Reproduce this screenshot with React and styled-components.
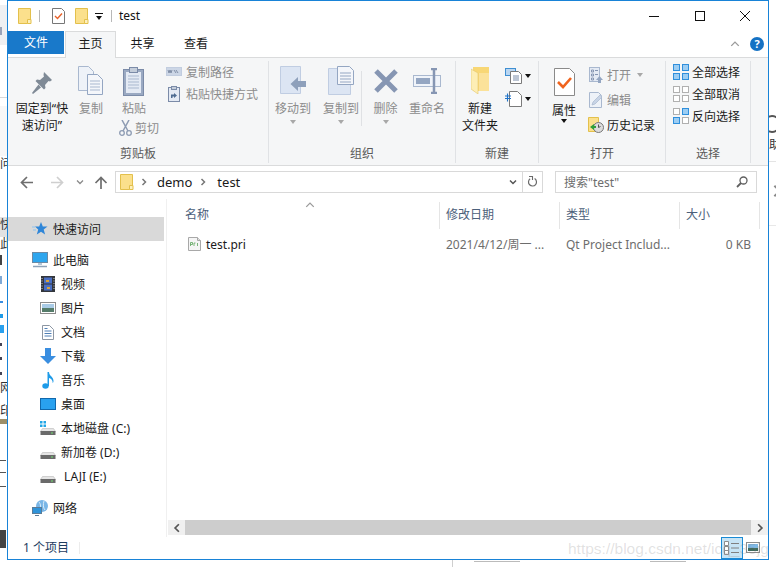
import React from 'react';
import styled, { createGlobalStyle } from 'styled-components';

const GlobalStyle = createGlobalStyle`
	html, body {
		margin: 0;
		padding: 0;
		background: #fff;
	}
	body {
		font-family: "Noto Sans", "Noto Sans CJK SC", sans-serif;
		font-size: 12px;
		color: #1a1a1a;
	}
`;

/* icons */
const Svg = ({ w = 16, h = 16, children }) => (
	<svg width={w} height={h} viewBox={`0 0 ${w} ${h}`} style={{ display: 'block', flex: 'none' }}>
		{children}
	</svg>
);

const QuickFolder = () => (
	<Svg w={14} h={16}>
		<path d="M.5.5h12v12l-3 3H.5z" fill="#fbe08c" stroke="#e3c04c" />
		<path d="M9.5 15.5v-4h3.5v4z" fill="#fdf0be" stroke="#e3c04c" />
	</Svg>
);

const CheckDoc = () => (
	<Svg w={13} h={16}>
		<path d="M.5.5h9l3 3v12H.5z" fill="#fff" stroke="#777" />
		<path d="M3 8l2.5 2.5L10 5.5" fill="none" stroke="#e8622a" strokeWidth="1.4" />
	</Svg>
);

const PinIcon = () => (
	<Svg w={22} h={24}>
		<path d="M13 1l8 8-2 1.5-1.5-.5-3.5 4 .5 3-1.5 1.5L4.500 10 6 8.500l3 .5 4-3.500-.5-1.500z" fill="#7f8a96" />
		<path d="M7.500 13.500L1 22l1 1 8-6.500z" fill="#7f8a96" />
	</Svg>
);

const CopyIcon = () => (
	<Svg w={26} h={29}>
		<path d="M.5.5h10l5 5v19H.5z" fill="#eef2f8" stroke="#a9b8cf" />
		<path d="M9.500 8.500h10l5 5v15h-15z" fill="#f4f6fa" stroke="#94a6c2" />
		<path d="M12 15h10M12 18h10M12 21h10M12 24h10" stroke="#a9b8cf" />
	</Svg>
);

const PasteIcon = () => (
	<Svg w={22} h={30}>
		<rect x=".5" y="3.500" width="20" height="26" fill="#9aa9c2" stroke="#7b8ba8" />
		<rect x="3" y="6" width="15" height="21" fill="#e4eaf4" />
		<path d="M5 10h11M5 13h11M5 16h11M5 19h11M5 22h11" stroke="#a9b8cf" />
		<rect x="6.500" y="1.500" width="8" height="5" fill="#c4cdda" stroke="#7b8ba8" />
	</Svg>
);

const CutIcon = () => (
	<Svg w={13} h={16}>
		<path d="M3 0l6 11M10 0L4 11" stroke="#8d9bb3" strokeWidth="1.5" fill="none" />
		<circle cx="3" cy="13" r="2.300" fill="none" stroke="#8d9bb3" strokeWidth="1.300" />
		<circle cx="10" cy="13" r="2.300" fill="none" stroke="#8d9bb3" strokeWidth="1.300" />
	</Svg>
);

const CopyPathIcon = () => (
	<Svg w={16} h={10}>
		<rect x=".5" y=".5" width="15" height="8" fill="#ccd6e6" stroke="#c2cddf" />
		<path d="M2 3l1 3 1-3 1 3 1-3M8 3l2 3M10 3l2 3" stroke="#6f7e98" strokeWidth=".8" fill="none" />
	</Svg>
);

const PasteShortcutIcon = () => (
	<Svg w={13} h={16}>
		<rect x=".5" y="1.500" width="11" height="14" fill="#e4eaf4" stroke="#7b8ba8" />
		<rect x="3.500" y=".5" width="5" height="3" fill="#c4cdda" stroke="#7b8ba8" />
		<path d="M3 12V8.500h3V7l3 2.500-3 2.500v-1.500H4.500V12z" fill="#4f6c92" />
	</Svg>
);

const MoveIcon = () => (
	<Svg w={27} h={29}>
		<path d="M.5.5h20v27H.5z" fill="#dce5f3" stroke="#c0cde2" />
		<path d="M10.500 18L18 11v4h8v6h-8v4z" fill="#8ea0bb" />
	</Svg>
);

const CopyToIcon = () => (
	<Svg w={27} h={30}>
		<path d="M.5 2.500h22v26H.5z" fill="#dce5f3" stroke="#c0cde2" />
		<path d="M9.500.5h12l4 4v14h-16z" fill="#f4f6fa" stroke="#94a6c2" />
		<path d="M12 7h11M12 10h11M12 13h11M12 16h11" stroke="#94a6c2" />
	</Svg>
);

const DeleteIcon = () => (
	<Svg w={26} h={26}>
		<path d="M3 3l20 20M23 3L3 23" stroke="#8696b3" strokeWidth="5" />
	</Svg>
);

const RenameIcon = () => (
	<Svg w={28} h={26}>
		<rect x=".5" y="7.500" width="27" height="11" fill="#f0f4fa" stroke="#a9b8cf" />
		<rect x="3" y="10" width="14" height="6" fill="#94a6c2" />
		<path d="M18 1h6M18 25h6M21 1v24" stroke="#8696b3" strokeWidth="2.500" />
	</Svg>
);

const NewFolderIcon = () => (
	<Svg w={19} h={27}>
		<path d="M2 0h16v24H2z" fill="#f8d775" />
		<path d="M8 6h10v18H8z" fill="#fbe29a" />
		<path d="M0 2l7 4v21l-7-5z" fill="#fdeeb5" stroke="#e4c66c" strokeWidth=".6" />
	</Svg>
);

const NewItemIcon = () => (
	<Svg w={17} h={16}>
		<rect x=".5" y=".5" width="10" height="7" fill="#b9d6f2" stroke="#3f8fd2" />
		<path d="M5.500 3.500h8l3 3v9h-11z" fill="#fff" stroke="#7a7a7a" />
		<path d="M8 8h6M8 10h6M8 12h6" stroke="#7a8ca8" />
	</Svg>
);

const EasyAccessIcon = () => (
	<Svg w={17} h={16}>
		<path d="M4.500.5h8l4 4v11h-12z" fill="#fff" stroke="#7a7a7a" />
		<path d="M0 5h6M0 7.500h6M2.500 2.500v8" stroke="#1f73c9" strokeWidth="1.100" />
	</Svg>
);

const PropertiesIcon = () => (
	<Svg w={21} h={28}>
		<path d="M.5.5h15l5 5v22H.5z" fill="#fff" stroke="#8a8a8a" />
		<path d="M4 14l5 5 8-9" fill="none" stroke="#f0641e" strokeWidth="2.600" />
	</Svg>
);

const OpenIcon = () => (
	<Svg w={14} h={16}>
		<rect x=".5" y=".5" width="10" height="14" fill="#e4eaf4" stroke="#a9b8cf" />
		<path d="M2.500 3h2v2h-2zM2.500 7h2v2h-2zM2.500 11h2v2h-2zM6 3.500h3M6 7.500h3" stroke="#8696b3" fill="none" />
		<path d="M7 13l3.500-4 3.500 4h-2v3h-3v-3z" fill="#94a6c2" />
	</Svg>
);

const EditIcon = () => (
	<Svg w={14} h={16}>
		<path d="M.5.5h9l3 3v12H.5z" fill="#eef2f8" stroke="#a9b8cf" />
		<path d="M3 13l1-3 7-7 2 2-7 7z" fill="#c8d4e6" stroke="#a9b8cf" strokeWidth=".7" />
	</Svg>
);

const HistoryIcon = () => (
	<Svg w={16} h={16}>
		<path d="M.5.5h10v11l-3 3h-7z" fill="#fbe08c" stroke="#e3c04c" />
		<circle cx="10.500" cy="10.500" r="5" fill="#dcdcdc" stroke="#777" />
		<path d="M10.500 7.500v3l2-1" fill="none" stroke="#555" />
		<path d="M2 10l4-3v2h2v2H6v2z" fill="#2f9e3a" />
	</Svg>
);

const GridIcon = ({ on }) => (
	<Svg w={16} h={16}>
		{[[0, 0], [9, 0], [0, 9], [9, 9]].map(([x, y], i) => (
			<rect
				key={`${x}-${y}`}
				x={x + 0.5}
				y={y + 0.5}
				width="6"
				height="6"
				fill={on[i] ? '#9ccdf3' : '#fff'}
				stroke={on[i] ? '#2f8fdc' : '#b0b0b0'}
			/>
		))}
	</Svg>
);

const SearchIcon = () => (
	<Svg w={12} h={12}>
		<circle cx="7.500" cy="4.500" r="3.500" fill="none" stroke="#5f5f5f" strokeWidth="1.300" />
		<path d="M5 7l-4 4" stroke="#5f5f5f" strokeWidth="1.800" />
	</Svg>
);

const RefreshIcon = () => (
	<Svg w={11} h={12}>
		<path d="M7.600 2.600a4 4 0 1 1-4.500.2" fill="none" stroke="#6a6a6a" strokeWidth="1.200" />
		<path d="M2 .5h3.500V4" fill="none" stroke="#6a6a6a" strokeWidth="1.100" />
	</Svg>
);

const Chevron = ({ dir = 'down', color = '#6a6a6a', size = 8, width = 1.500 }) => {
	const paths = {
		down: 'M1 2.500l3 3 3-3',
		up: 'M1 5.500l3-3 3 3',
		left: 'M5.500 1l-3 3 3 3',
		right: 'M2.500 1l3 3-3 3',
	};
	return (
		<svg width={size} height={size} viewBox="0 0 8 8" style={{ display: 'block', flex: 'none' }}>
			<path d={paths[dir]} fill="none" stroke={color} strokeWidth={width} />
		</svg>
	);
};

const NavArrow = ({ path, color }) => (
	<Svg w={14} h={13}>
		<path d={path} fill="none" stroke={color} strokeWidth="1.700" />
	</Svg>
);

const StarIcon = () => (
	<Svg w={16} h={14}>
		<path d="M9 0l1.800 4.500H15.500l-3.800 3 1.400 5L9 9.700l-4.200 2.800 1.400-5-3.200-3h4.200z" fill="#2f86d8" />
		<path d="M0 5h3M1 8h3" stroke="#8fc3ee" />
	</Svg>
);

const PcIcon = () => (
	<Svg w={16} h={16}>
		<rect x=".5" y=".5" width="15" height="10" fill="#2ea6ee" stroke="#6b8aa5" />
		<path d="M6 11h4v2H6z" fill="#b5c7d8" />
		<path d="M1 14.500h14" stroke="#8ea3b8" strokeWidth="1.500" />
	</Svg>
);

const VideoIcon = () => (
	<Svg w={14} h={16}>
		<rect width="14" height="16" fill="#33363c" />
		<rect x="3" y="1.500" width="8" height="6" fill="#4a6fc4" />
		<rect x="3" y="8.500" width="8" height="6" fill="#4a6fc4" />
		<path d="M5 4h3v2H5zM6 11h3v2H6z" fill="#d8a23a" />
		<path d="M1 2v12M13 2v12" stroke="#ccc" strokeDasharray="1 1.500" />
	</Svg>
);

const PictureIcon = () => (
	<Svg w={16} h={12}>
		<rect x=".5" y=".5" width="15" height="11" fill="#fff" stroke="#8c8c8c" />
		<rect x="2" y="2" width="12" height="4" fill="#a9cbe6" />
		<rect x="2" y="6" width="12" height="4" fill="#557c6a" />
	</Svg>
);

const DocIcon = () => (
	<Svg w={12} h={15}>
		<path d="M.5.5h7l4 4v10H.5z" fill="#fff" stroke="#8c96a3" />
		<path d="M2.500 6h7M2.500 8.500h7M2.500 11h7M2.500 3.500h3" stroke="#4f7fb5" />
	</Svg>
);

const DownloadIcon = () => (
	<Svg w={16} h={16}>
		<path d="M5 0h6v8h5l-8 8-8-8h5z" fill="#3a8ee0" />
	</Svg>
);

const MusicIcon = () => (
	<Svg w={12} h={17}>
		<ellipse cx="3.500" cy="14" rx="3.200" ry="2.700" fill="#1e9be8" />
		<path d="M5.500 14V0h1.500c0 4 4.500 4.500 4.500 9 0 1-.4 1.600-.8 2 .2-3-2-4.500-3.700-5v8z" fill="#1e9be8" />
	</Svg>
);

const DesktopIcon = () => (
	<Svg w={16} h={12}>
		<rect x=".5" y=".5" width="15" height="11" fill="#29a1ef" stroke="#1168ac" />
	</Svg>
);

const DriveIcon = ({ windows }) => (
	<Svg w={16} h={14}>
		{windows && <path d="M0 0h2.500v2.500H0zM3.500 0H6v2.500H3.500zM0 3.500h2.500V6H0zM3.500 3.500H6V6H3.500z" fill="#21a6e6" />}
		<path d="M2.500 7.500h11l2 3H.5z" fill="#e5e5e5" stroke="#b8b8b8" strokeWidth=".6" />
		<rect x=".5" y="10" width="15" height="4" fill="#6a6a6a" />
		<rect x="11" y="11.500" width="2" height="1" fill="#6fe06f" />
	</Svg>
);

const NetworkIcon = () => (
	<Svg w={16} h={16}>
		<circle cx="10" cy="6" r="6" fill="#7ab6e6" />
		<path d="M7 2c2 2 2 6 0 9M12 1c-1 3-1 7 1 9" stroke="#d7ecfa" fill="none" />
		<rect x=".5" y="7.500" width="9" height="6" fill="#2f93d9" stroke="#5a7c98" />
		<path d="M3 15.500h4" stroke="#5a7c98" />
	</Svg>
);

const PriIcon = () => (
	<Svg w={13} h={14}>
		<path d="M.5.5h9l3 3v10H.5z" fill="#f5f5f5" stroke="#a8a8a8" />
		<path d="M9.500.5v3h3" fill="#e0e0e0" stroke="#a8a8a8" />
		<path d="M2.500 9V5.500h2v2h-2M6 9V6h1.500M9.500 9V6" fill="none" stroke="#5aa55a" strokeWidth=".8" />
	</Svg>
);

const DetailsViewIcon = () => (
	<Svg w={16} h={14}>
		<path d="M.5.5h4v4h-4zM.5 5.500h4v4h-4zM.5 9.500h4v4h-4z" fill="#fff" stroke="#8d8d8d" />
		<path d="M7 2.500h8M7 7h8M7 11.500h8" stroke="#808080" />
	</Svg>
);

const ThumbViewIcon = () => (
	<Svg w={14} h={12}>
		<rect x=".5" y=".5" width="13" height="10" fill="#fff" stroke="#8c8c8c" />
		<rect x="2" y="2" width="10" height="4" fill="#7fb8e4" />
		<rect x="2" y="6" width="10" height="3" fill="#3f6a5c" />
	</Svg>
);

/* desktop behind the window */
const Page = styled.div`
	position: relative;
	width: 776px;
	height: 567px;
	overflow: hidden;
	background: #fff;
`;

const Scrap = styled.div`
	position: absolute;
	left: ${({ $x }) => $x}px;
	top: ${({ $y }) => $y}px;
	width: ${({ $w }) => $w}px;
	height: ${({ $h }) => $h}px;
	background: ${({ $c }) => $c};
`;

const ScrapText = styled.span`
	position: absolute;
	left: ${({ $x }) => $x}px;
	top: ${({ $y }) => $y}px;
	width: ${({ $w }) => $w || 7}px;
	overflow: hidden;
	font-size: 12px;
	line-height: 14px;
	white-space: nowrap;
	color: #333;
`;

const scraps = [
	[0, 5, 7, 40, '#eff0f2'],
	[0, 27, 2, 8, '#9aa3b8'],
	[0, 97, 7, 1, '#d8d8d8'],
	[0, 106, 7, 50, '#f7f7f7'],
	[0, 217, 7, 20, '#e2e2e2'],
	[0, 255, 2, 10, '#444'],
	[0, 276, 2, 8, '#7fa9d6'],
	[0, 301, 3, 2, '#3a8ee0'],
	[0, 314, 3, 4, '#1e9be8'],
	[0, 325, 4, 8, '#29a1ef'],
	[0, 343, 2, 3, '#445'],
	[0, 357, 2, 3, '#445'],
	[0, 372, 2, 3, '#445'],
	[0, 419, 7, 5, '#9c8f6a'],
	[0, 460, 6, 1, '#555'],
	[0, 472, 6, 1, '#555'],
	[0, 486, 6, 1, '#555'],
	[0, 530, 6, 18, '#444'],
	[452, 560, 1, 7, '#cfcfcf'],
	[474, 561, 46, 1, '#bbb'],
	[650, 561, 36, 1, '#bbb'],
	[769, 161, 7, 1, '#e4e4e4'],
	[769, 225, 7, 1, '#e8e8e8'],
];

const RightCircle = styled.div`
	position: absolute;
	left: 763px;
	top: 115px;
	width: 14px;
	height: 14px;
	border: 2px solid #555;
	border-radius: 50%;
`;

const RightChevron = styled.div`
	position: absolute;
	left: 770px;
	top: 184px;
`;

/* window frame */
const Window = styled.div`
	position: relative;
	z-index: 1;
	box-sizing: border-box;
	margin-left: 7px;
	width: 762px;
	height: 560px;
	background: #fff;
	border: 1px solid #1883d7;
	display: flex;
	flex-direction: column;
`;

const TitleBar = styled.div`
	display: flex;
	align-items: center;
	height: 30px;
	flex: none;
`;

const QuickAccess = styled.div`
	display: flex;
	align-items: center;
	padding-left: 10px;
	flex: 1;
`;

const QuickSep = styled.div`
	width: 1px;
	height: 12px;
	margin: 0 ${({ $after }) => $after}px 0 ${({ $before }) => $before}px;
	background: #b8b8b8;
`;

const QuickGap = styled.div`
	width: ${({ $w }) => $w}px;
`;

const QuickArrow = styled.div`
	margin-left: 6px;
	width: 8px;
	border-top: 1px solid #111;
	display: flex;
	flex-direction: column;
	align-items: center;
	padding-top: 2px;
`;

const TitleText = styled.span`
	font-size: 12px;
	line-height: 16px;
	color: #111;
`;

const WindowControls = styled.div`
	display: flex;
	align-items: center;
`;

const WindowButton = styled.div`
	width: 45.500px;
	height: 30px;
	display: flex;
	align-items: center;
	justify-content: center;
`;

const TabRow = styled.div`
	display: flex;
	height: 26px;
	flex: none;
	align-items: flex-start;
`;

const FileTab = styled.div`
	width: 56px;
	height: 23px;
	margin-right: 1px;
	background: #1979ca;
	color: #fff;
	line-height: 23px;
	text-align: center;
`;

const Tab = styled.div`
	box-sizing: border-box;
	width: ${({ $w }) => $w}px;
	height: ${({ $active }) => ($active ? 27 : 24)}px;
	line-height: 23px;
	text-align: center;
	position: relative;
	z-index: 2;
	background: ${({ $active }) => ($active ? '#f5f6f7' : 'transparent')};
	border: 1px solid ${({ $active }) => ($active ? '#dadbdc' : 'transparent')};
	border-bottom: none;
`;

const TabRight = styled.div`
	margin-left: auto;
	display: flex;
	align-items: center;
	gap: 10px;
	height: 26px;
	padding-right: 4px;
`;

const HelpBadge = styled.div`
	width: 14px;
	height: 14px;
	border-radius: 50%;
	background: #1572c4;
	color: #fff;
	font-size: 11px;
	font-weight: 700;
	line-height: 14px;
	text-align: center;
`;

/* ribbon */
const Ribbon = styled.div`
	display: flex;
	height: 109px;
	flex: none;
	box-sizing: border-box;
	padding-top: 3px;
	background: #f5f6f7;
	border-top: 1px solid #dadbdc;
	border-bottom: 1px solid #dadbdc;
`;

const Group = styled.div`
	box-sizing: border-box;
	width: ${({ $w }) => $w}px;
	height: 102px;
	padding-left: ${({ $pad }) => $pad || 0}px;
	border-right: 1px solid #e0e2e5;
	display: flex;
	flex-direction: column;
`;

const GroupItems = styled.div`
	display: flex;
	flex: 1;
	min-height: 0;
`;

const GroupLabel = styled.div`
	height: 18px;
	line-height: 17px;
	text-align: center;
	color: #5a5a5a;
	margin-left: ${({ $pad }) => -($pad || 0)}px;
`;

const BigButton = styled.div`
	display: flex;
	flex-direction: column;
	align-items: center;
	width: ${({ $w }) => $w}px;
	margin-right: ${({ $mr }) => $mr || 0}px;
	flex: none;
`;

const BigIconSlot = styled.div`
	height: ${({ $h }) => $h || 39}px;
	display: flex;
	align-items: ${({ $top }) => ($top ? 'flex-start' : 'center')};
	justify-content: center;
	padding-top: ${({ $pt }) => $pt || 0}px;
	box-sizing: border-box;
`;

const BigLabel = styled.div`
	line-height: 17px;
	text-align: center;
	white-space: nowrap;
	color: ${({ $disabled }) => ($disabled ? '#8c8c8c' : '#1a1a1a')};
`;

const Caret = styled.div`
	width: 0;
	height: 0;
	border-left: 3.500px solid transparent;
	border-right: 3.500px solid transparent;
	border-top: 4px solid ${({ $c }) => $c || '#111'};
	margin: ${({ $m }) => $m || '0'};
`;

const SmallColumn = styled.div`
	display: flex;
	flex-direction: column;
	margin-left: ${({ $ml }) => $ml || 0}px;
	padding-top: ${({ $pt }) => $pt || 0}px;
`;

const SmallButton = styled.div`
	display: flex;
	align-items: center;
	gap: ${({ $gap }) => $gap || 4}px;
	height: ${({ $h }) => $h || 22}px;
	margin-left: ${({ $ml }) => $ml || 0}px;
	white-space: nowrap;
	color: ${({ $disabled }) => ($disabled ? '#8c8c8c' : '#1a1a1a')};
`;

const IconSlot = styled.div`
	width: ${({ $w }) => $w || 16}px;
	display: flex;
	justify-content: center;
	flex: none;
`;

const RibbonSep = styled.div`
	width: 1px;
	height: 55px;
	margin-top: 10px;
	background: #dfe1e4;
	flex: none;
`;

/* address bar */
const NavBar = styled.div`
	display: flex;
	align-items: center;
	height: 33px;
	flex: none;
	box-sizing: border-box;
	padding-bottom: 1px;
`;

const NavButton = styled.div`
	width: ${({ $w }) => $w}px;
	display: flex;
	justify-content: center;
	flex: none;
`;

const AddressBox = styled.div`
	box-sizing: border-box;
	width: 428px;
	height: 22px;
	margin-left: 5px;
	display: flex;
	align-items: center;
	border: 1px solid #d9d9d9;
	padding-left: 4px;
`;

const Crumb = styled.span`
	font-size: 13px;
	line-height: 18px;
	color: #1a1a1a;
`;

const CrumbSep = styled.div`
	margin: 0 ${({ $r }) => $r}px 0 ${({ $l }) => $l}px;
`;

const AddressEnd = styled.div`
	margin-left: auto;
	display: flex;
	align-items: center;
	height: 100%;
`;

const AddressDrop = styled.div`
	width: 19px;
	display: flex;
	justify-content: center;
`;

const AddressRefresh = styled.div`
	box-sizing: border-box;
	width: 20px;
	height: 100%;
	border-left: 1px solid #d9d9d9;
	display: flex;
	align-items: center;
	justify-content: center;
`;

const SearchBox = styled.div`
	box-sizing: border-box;
	width: 202px;
	height: 22px;
	margin-left: 12px;
	padding: 0 8px 0 8px;
	display: flex;
	align-items: center;
	justify-content: space-between;
	border: 1px solid #d9d9d9;
	color: #6d6d6d;
`;

/* body */
const Body = styled.div`
	display: flex;
	flex: 1;
	min-height: 0;
`;

const Sidebar = styled.div`
	box-sizing: border-box;
	width: 159px;
	flex: none;
	padding-top: 18px;
	border-right: 1px solid #f0f0f0;
`;

const NavRow = styled.div`
	display: flex;
	align-items: center;
	gap: 5px;
	height: 24px;
	width: 156px;
	box-sizing: border-box;
	padding-left: ${({ $depth }) => ($depth ? 32 : 24)}px;
	margin-bottom: ${({ $mb }) => $mb || 0}px;
	background: ${({ $selected }) => ($selected ? '#d9d9d9' : 'transparent')};
	white-space: pre;
`;

const NavIcon = styled.div`
	width: 16px;
	display: flex;
	justify-content: center;
	flex: none;
`;

const Main = styled.div`
	position: relative;
	flex: 1;
	min-width: 0;
	display: flex;
	flex-direction: column;
	padding-left: 1px;
`;

const SortMark = styled.div`
	position: absolute;
	left: 138px;
	top: 1px;
`;

const Columns = styled.div`
	display: grid;
	grid-template-columns: 272px 120px 120px 80px;
	height: 33px;
	padding-top: 3px;
	box-sizing: border-box;
	flex: none;
`;

const HeaderCell = styled.div`
	padding-left: ${({ $first }) => ($first ? 17 : 6)}px;
	height: 27px;
	line-height: 26px;
	color: #4c607a;
	border-right: 1px solid #e5e5e5;
	box-sizing: border-box;
`;

const FileRow = styled.div`
	display: grid;
	grid-template-columns: 272px 120px 120px 71px;
	height: 24px;
	align-items: center;
	flex: none;
`;

const NameCell = styled.div`
	display: flex;
	align-items: center;
	gap: 5px;
	padding-left: 20px;
	color: #1a1a1a;
`;

const MetaCell = styled.div`
	padding-left: 6px;
	color: #6d6d6d;
	white-space: nowrap;
	overflow: hidden;
	text-align: ${({ $right }) => ($right ? 'right' : 'left')};
`;

const ScrollBar = styled.div`
	margin-top: auto;
	margin-bottom: 2px;
	display: flex;
	align-items: stretch;
	height: 15px;
	background: #f0f0f0;
	flex: none;
`;

const ScrollArrow = styled.div`
	width: 17px;
	display: flex;
	align-items: center;
	justify-content: center;
	flex: none;
`;

const ScrollThumb = styled.div`
	flex: 1;
	background: #cdcdcd;
`;

/* status bar */
const StatusBar = styled.div`
	display: flex;
	align-items: center;
	height: 22px;
	flex: none;
	padding-left: 15px;
	color: #1e3d5f;
`;

const StatusCount = styled.span`
	width: 56px;
	line-height: 20px;
`;

const StatusSep = styled.div`
	width: 1px;
	height: 12px;
	background: #ececec;
`;

const ViewButtons = styled.div`
	margin-left: auto;
	display: flex;
	align-items: center;
	gap: 2px;
	padding-right: 7px;
`;

const ViewButton = styled.div`
	box-sizing: border-box;
	width: ${({ $active }) => ($active ? 22 : 16)}px;
	height: 22px;
	display: flex;
	align-items: center;
	justify-content: center;
	background: ${({ $active }) => ($active ? '#c7e4f5' : 'transparent')};
	border: ${({ $active }) => ($active ? '1px solid #1a8ad4' : 'none')};
`;

const Watermark = styled.div`
	position: absolute;
	z-index: 3;
	left: 568px;
	top: 539px;
	font-family: "Liberation Sans", sans-serif;
	font-size: 15.500px;
	line-height: 20px;
	color: rgba(120, 120, 120, 0.22);
	white-space: nowrap;
	pointer-events: none;
`;

const sideItems = [
	{ label: '快速访问', icon: <StarIcon />, selected: true, mb: 7 },
	{ label: '此电脑', icon: <PcIcon /> },
	{ label: '视频', icon: <VideoIcon />, depth: 1 },
	{ label: '图片', icon: <PictureIcon />, depth: 1 },
	{ label: '文档', icon: <DocIcon />, depth: 1 },
	{ label: '下载', icon: <DownloadIcon />, depth: 1 },
	{ label: '音乐', icon: <MusicIcon />, depth: 1 },
	{ label: '桌面', icon: <DesktopIcon />, depth: 1 },
	{ label: '本地磁盘 (C:)', icon: <DriveIcon windows />, depth: 1 },
	{ label: '新加卷 (D:)', icon: <DriveIcon />, depth: 1 },
	{ label: ' LAJI (E:)', icon: <DriveIcon />, depth: 1, mb: 8 },
	{ label: '网络', icon: <NetworkIcon /> },
];

const App = () => (
	<Page>
		<GlobalStyle />
		{scraps.map(([x, y, w, h, c]) => (
			<Scrap key={`${x}-${y}`} $x={x} $y={y} $w={w} $h={h} $c={c} />
		))}
		<ScrapText $x={0} $y={157}>问</ScrapText>
		<ScrapText $x={0} $y={218}>快</ScrapText>
		<ScrapText $x={0} $y={237}>此</ScrapText>
		<ScrapText $x={0} $y={381}>网</ScrapText>
		<ScrapText $x={0} $y={404}>印</ScrapText>
		<ScrapText $x={769} $y={138}>助</ScrapText>
		<RightCircle />
		<RightChevron>
			<Chevron dir="right" color="#8a8a8a" size={14} width={1.200} />
		</RightChevron>

		<Window>
			<TitleBar>
				<QuickAccess>
					<QuickFolder />
					<QuickSep $before={7} $after={12} />
					<CheckDoc />
					<QuickGap $w={10} />
					<QuickFolder />
					<QuickArrow>
						<Caret />
					</QuickArrow>
					<QuickSep $before={8} $after={7} />
					<TitleText>test</TitleText>
				</QuickAccess>
				<WindowControls>
					<WindowButton>
						<Svg w={10} h={10}><path d="M0 5.500h10" stroke="#111" /></Svg>
					</WindowButton>
					<WindowButton>
						<Svg w={10} h={10}><rect x=".5" y=".5" width="9" height="9" fill="none" stroke="#111" /></Svg>
					</WindowButton>
					<WindowButton>
						<Svg w={10} h={10}><path d="M0 0l10 10M10 0L0 10" stroke="#111" /></Svg>
					</WindowButton>
				</WindowControls>
			</TitleBar>

			<TabRow>
				<FileTab>文件</FileTab>
				<Tab $w={51} $active>主页</Tab>
				<Tab $w={53}>共享</Tab>
				<Tab $w={54}>查看</Tab>
				<TabRight>
					<Chevron dir="up" color="#9a9a9a" size={10} width={1.100} />
					<HelpBadge>?</HelpBadge>
				</TabRight>
			</TabRow>

			<Ribbon>
				<Group $w={261} $pad={6}>
					<GroupItems>
						<BigButton $w={56}>
							<BigIconSlot $pt={4}><PinIcon /></BigIconSlot>
							<BigLabel>固定到“快<br />速访问”</BigLabel>
						</BigButton>
						<BigButton $w={42}>
							<BigIconSlot><CopyIcon /></BigIconSlot>
							<BigLabel $disabled>复制</BigLabel>
						</BigButton>
						<BigButton $w={44}>
							<BigIconSlot><PasteIcon /></BigIconSlot>
							<BigLabel $disabled>粘贴</BigLabel>
							<SmallButton $disabled $gap={3} $ml={10}>
								<CutIcon />
								剪切
							</SmallButton>
						</BigButton>
						<SmallColumn $ml={10}>
							<SmallButton $disabled><IconSlot><CopyPathIcon /></IconSlot>复制路径</SmallButton>
							<SmallButton $disabled><IconSlot><PasteShortcutIcon /></IconSlot>粘贴快捷方式</SmallButton>
						</SmallColumn>
					</GroupItems>
					<GroupLabel $pad={6}>剪贴板</GroupLabel>
				</Group>

				<Group $w={187} $pad={2}>
					<GroupItems>
						<BigButton $w={44} $mr={6}>
							<BigIconSlot><MoveIcon /></BigIconSlot>
							<BigLabel $disabled>移动到</BigLabel>
							<Caret $c="#a8a8a8" $m="3px 0 0" />
						</BigButton>
						<BigButton $w={40}>
							<BigIconSlot><CopyToIcon /></BigIconSlot>
							<BigLabel $disabled>复制到</BigLabel>
							<Caret $c="#a8a8a8" $m="3px 0 0" />
						</BigButton>
						<RibbonSep />
						<BigButton $w={47}>
							<BigIconSlot><DeleteIcon /></BigIconSlot>
							<BigLabel $disabled>删除</BigLabel>
							<Caret $c="#a8a8a8" $m="3px 0 0" />
						</BigButton>
						<BigButton $w={36}>
							<BigIconSlot><RenameIcon /></BigIconSlot>
							<BigLabel $disabled>重命名</BigLabel>
						</BigButton>
					</GroupItems>
					<GroupLabel $pad={2}>组织</GroupLabel>
				</Group>

				<Group $w={83} $pad={2}>
					<GroupItems>
						<BigButton $w={44}>
							<BigIconSlot><NewFolderIcon /></BigIconSlot>
							<BigLabel>新建<br />文件夹</BigLabel>
						</BigButton>
						<SmallColumn $ml={3} $pt={3}>
							<SmallButton $h={23} $gap={3}><NewItemIcon /><Caret /></SmallButton>
							<SmallButton $h={23} $gap={3}><EasyAccessIcon /><Caret /></SmallButton>
						</SmallColumn>
					</GroupItems>
					<GroupLabel $pad={2}>新建</GroupLabel>
				</Group>

				<Group $w={127} $pad={3}>
					<GroupItems>
						<BigButton $w={44}>
							<BigIconSlot $h={41}><PropertiesIcon /></BigIconSlot>
							<BigLabel>属性</BigLabel>
							<Caret />
						</BigButton>
						<SmallColumn $ml={3} $pt={1}>
							<SmallButton $h={25} $disabled>
								<IconSlot $w={14}><OpenIcon /></IconSlot>
								打开
								<Caret $c="#a8a8a8" $m="0 0 0 2px" />
							</SmallButton>
							<SmallButton $h={25} $disabled><IconSlot $w={14}><EditIcon /></IconSlot>编辑</SmallButton>
							<SmallButton $h={25}><IconSlot $w={14}><HistoryIcon /></IconSlot>历史记录</SmallButton>
						</SmallColumn>
					</GroupItems>
					<GroupLabel $pad={3}>打开</GroupLabel>
				</Group>

				<Group $w={85} $pad={7}>
					<GroupItems>
						<SmallColumn>
							<SmallButton $gap={3}><GridIcon on={[1, 1, 1, 1]} />全部选择</SmallButton>
							<SmallButton $gap={3}><GridIcon on={[0, 0, 0, 0]} />全部取消</SmallButton>
							<SmallButton $gap={3}><GridIcon on={[0, 1, 1, 0]} />反向选择</SmallButton>
						</SmallColumn>
					</GroupItems>
					<GroupLabel $pad={7}>选择</GroupLabel>
				</Group>
			</Ribbon>

			<NavBar>
				<NavButton $w={38}><NavArrow path="M13 6.500H2M7 1L1.500 6.500 7 12" color="#6e6e6e" /></NavButton>
				<NavButton $w={22}><NavArrow path="M1 6.500h11M7 1l5.500 5.500L7 12" color="#cfcfcf" /></NavButton>
				<NavButton $w={24}><Chevron color="#8a8a8a" size={8} width={1.300} /></NavButton>
				<NavButton $w={18}><NavArrow path="M7 13V2M1.500 7L7 1.500 12.500 7" color="#6e6e6e" /></NavButton>
				<AddressBox>
					<QuickFolder />
					<CrumbSep $l={6} $r={9}><Chevron dir="right" color="#777" /></CrumbSep>
					<Crumb>demo</Crumb>
					<CrumbSep $l={7} $r={10}><Chevron dir="right" color="#777" /></CrumbSep>
					<Crumb>test</Crumb>
					<AddressEnd>
						<AddressDrop><Chevron color="#555" /></AddressDrop>
						<AddressRefresh><RefreshIcon /></AddressRefresh>
					</AddressEnd>
				</AddressBox>
				<SearchBox>
					搜索"test"
					<SearchIcon />
				</SearchBox>
			</NavBar>

			<Body>
				<Sidebar>
					{sideItems.map(({ label, icon, selected, depth, mb }) => (
						<NavRow key={label} $selected={selected} $depth={depth} $mb={mb}>
							<NavIcon>{icon}</NavIcon>
							{label}
						</NavRow>
					))}
				</Sidebar>
				<Main>
					<SortMark><Chevron dir="up" color="#9a9a9a" size={10} width={1} /></SortMark>
					<Columns>
						<HeaderCell $first>名称</HeaderCell>
						<HeaderCell>修改日期</HeaderCell>
						<HeaderCell>类型</HeaderCell>
						<HeaderCell>大小</HeaderCell>
					</Columns>
					<FileRow>
						<NameCell><PriIcon />test.pri</NameCell>
						<MetaCell>2021/4/12/周一 ...</MetaCell>
						<MetaCell>Qt Project Includ...</MetaCell>
						<MetaCell $right>0 KB</MetaCell>
					</FileRow>
					<ScrollBar>
						<ScrollArrow><Chevron dir="left" color="#555" size={10} width={1.400} /></ScrollArrow>
						<ScrollThumb />
						<ScrollArrow><Chevron dir="right" color="#555" size={10} width={1.400} /></ScrollArrow>
					</ScrollBar>
				</Main>
			</Body>

			<StatusBar>
				<StatusCount>1 个项目</StatusCount>
				<StatusSep />
				<ViewButtons>
					<ViewButton $active><DetailsViewIcon /></ViewButton>
					<ViewButton><ThumbViewIcon /></ViewButton>
				</ViewButtons>
			</StatusBar>
		</Window>

		<Watermark>https://blog.csdn.net/icq_35jg</Watermark>
	</Page>
);

export default App;
